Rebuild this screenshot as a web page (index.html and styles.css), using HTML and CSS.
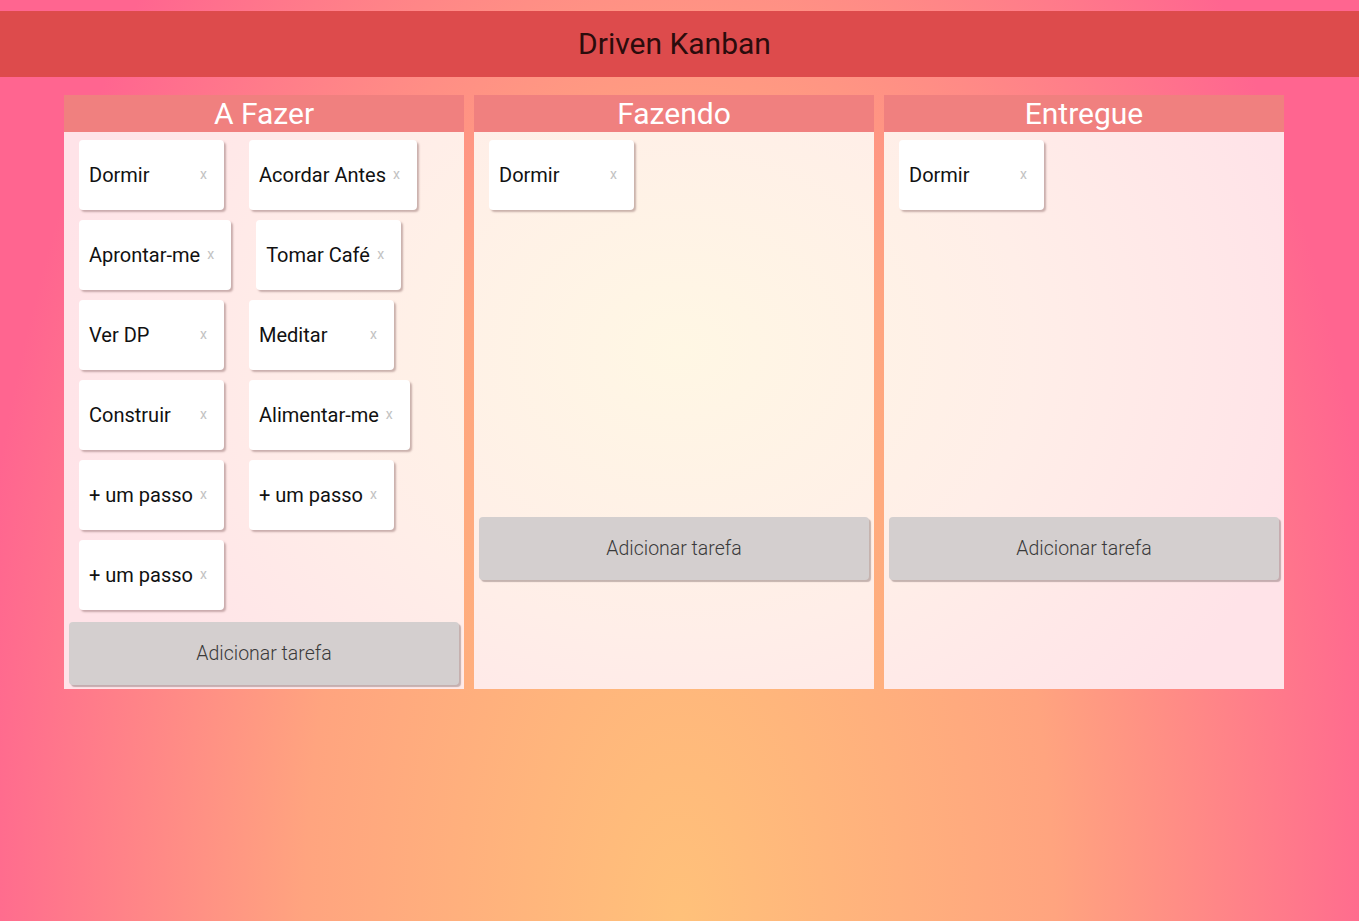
FILE: index.html
```html
<!DOCTYPE html>
<html lang="pt">
<head>
<meta charset="utf-8">
<title>Driven Kanban</title>
<link rel="stylesheet" href="styles.css">
</head>
<body>
<header class="topbar">Driven Kanban</header>
<main class="board">
  <section class="column">
    <h2 class="column-title">A Fazer</h2>
    <div class="column-body">
      <div class="cards">
        <div class="card"><span class="card-text">Dormir</span><span class="card-x">x</span></div>
        <div class="card"><span class="card-text">Acordar Antes</span><span class="card-x">x</span></div>
        <div class="card"><span class="card-text">Aprontar-me</span><span class="card-x">x</span></div>
        <div class="card"><span class="card-text">Tomar Café</span><span class="card-x">x</span></div>
        <div class="card"><span class="card-text">Ver DP</span><span class="card-x">x</span></div>
        <div class="card"><span class="card-text">Meditar</span><span class="card-x">x</span></div>
        <div class="card"><span class="card-text">Construir</span><span class="card-x">x</span></div>
        <div class="card"><span class="card-text">Alimentar-me</span><span class="card-x">x</span></div>
        <div class="card"><span class="card-text">+ um passo</span><span class="card-x">x</span></div>
        <div class="card"><span class="card-text">+ um passo</span><span class="card-x">x</span></div>
        <div class="card"><span class="card-text">+ um passo</span><span class="card-x">x</span></div>
      </div>
      <button class="add-btn">Adicionar tarefa</button>
    </div>
  </section>
  <section class="column">
    <h2 class="column-title">Fazendo</h2>
    <div class="column-body">
      <div class="cards">
        <div class="card"><span class="card-text">Dormir</span><span class="card-x">x</span></div>
      </div>
      <button class="add-btn">Adicionar tarefa</button>
    </div>
  </section>
  <section class="column">
    <h2 class="column-title">Entregue</h2>
    <div class="column-body">
      <div class="cards">
        <div class="card"><span class="card-text">Dormir</span><span class="card-x">x</span></div>
      </div>
      <button class="add-btn">Adicionar tarefa</button>
    </div>
  </section>
</main>
</body>
</html>
```

FILE: styles.css
```css
html, body {
  margin: 0;
  padding: 0;
}

body {
  min-height: 921px;
  font-family: Roboto, "Liberation Sans", sans-serif;
  background: radial-gradient(ellipse 720px 1400px at 50% 100%, #ffc17a 0%, #ffa47f 52%, #ff6590 100%);
  background-attachment: fixed;
  overflow: hidden;
}

.topbar {
  margin-top: 11px;
  height: 66px;
  line-height: 66px;
  padding-right: 10px;
  background: #dd4b4c;
  color: #2b0c0c;
  text-align: center;
  font-size: 30px;
  font-weight: 400;
}

.board {
  display: flex;
  gap: 10px;
  padding-left: 64px;
  margin-top: 18px;
  align-items: stretch;
}

.column {
  width: 400px;
  display: flex;
  flex-direction: column;
}

.column-title {
  margin: 0;
  height: 37px;
  line-height: 37px;
  background: #f0807f;
  color: #ffffff;
  text-align: center;
  font-size: 30px;
  font-weight: 400;
}

.column-body {
  flex: 1;
  display: flex;
  flex-direction: column;
  background: radial-gradient(ellipse 640px 520px at 50% 38%, #fff7e4 0%, #ffeee8 55%, #ffe3e8 100%) fixed;
  padding-bottom: 4px;
}

.cards {
  display: flex;
  flex-wrap: wrap;
  align-content: flex-start;
  box-sizing: border-box;
  min-height: 385px;
  padding: 8px 0 2px 0;
}

.card {
  box-sizing: border-box;
  min-width: 145px;
  height: 70px;
  margin: 0 10px 10px 15px;
  padding: 0 17px 0 10px;
  display: flex;
  align-items: center;
  justify-content: space-between;
  gap: 7px;
  background: #ffffff;
  border-radius: 4px;
  box-shadow: 2px 2px 2px rgba(120, 80, 80, 0.4);
}

.card-text {
  font-size: 20px;
  color: #111111;
}

.card-x {
  font-size: 14px;
  color: #c2c2c2;
  margin-top: -2px;
}

.add-btn {
  margin: 0 5px;
  height: 63px;
  border: none;
  border-radius: 4px;
  background: #d4cfcf;
  box-shadow: 2px 2px 1px rgba(110, 90, 90, 0.4);
  font-family: Roboto, "Liberation Sans", sans-serif;
  font-weight: 300;
  font-size: 19.5px;
  color: #3a3a3a;
}
```
